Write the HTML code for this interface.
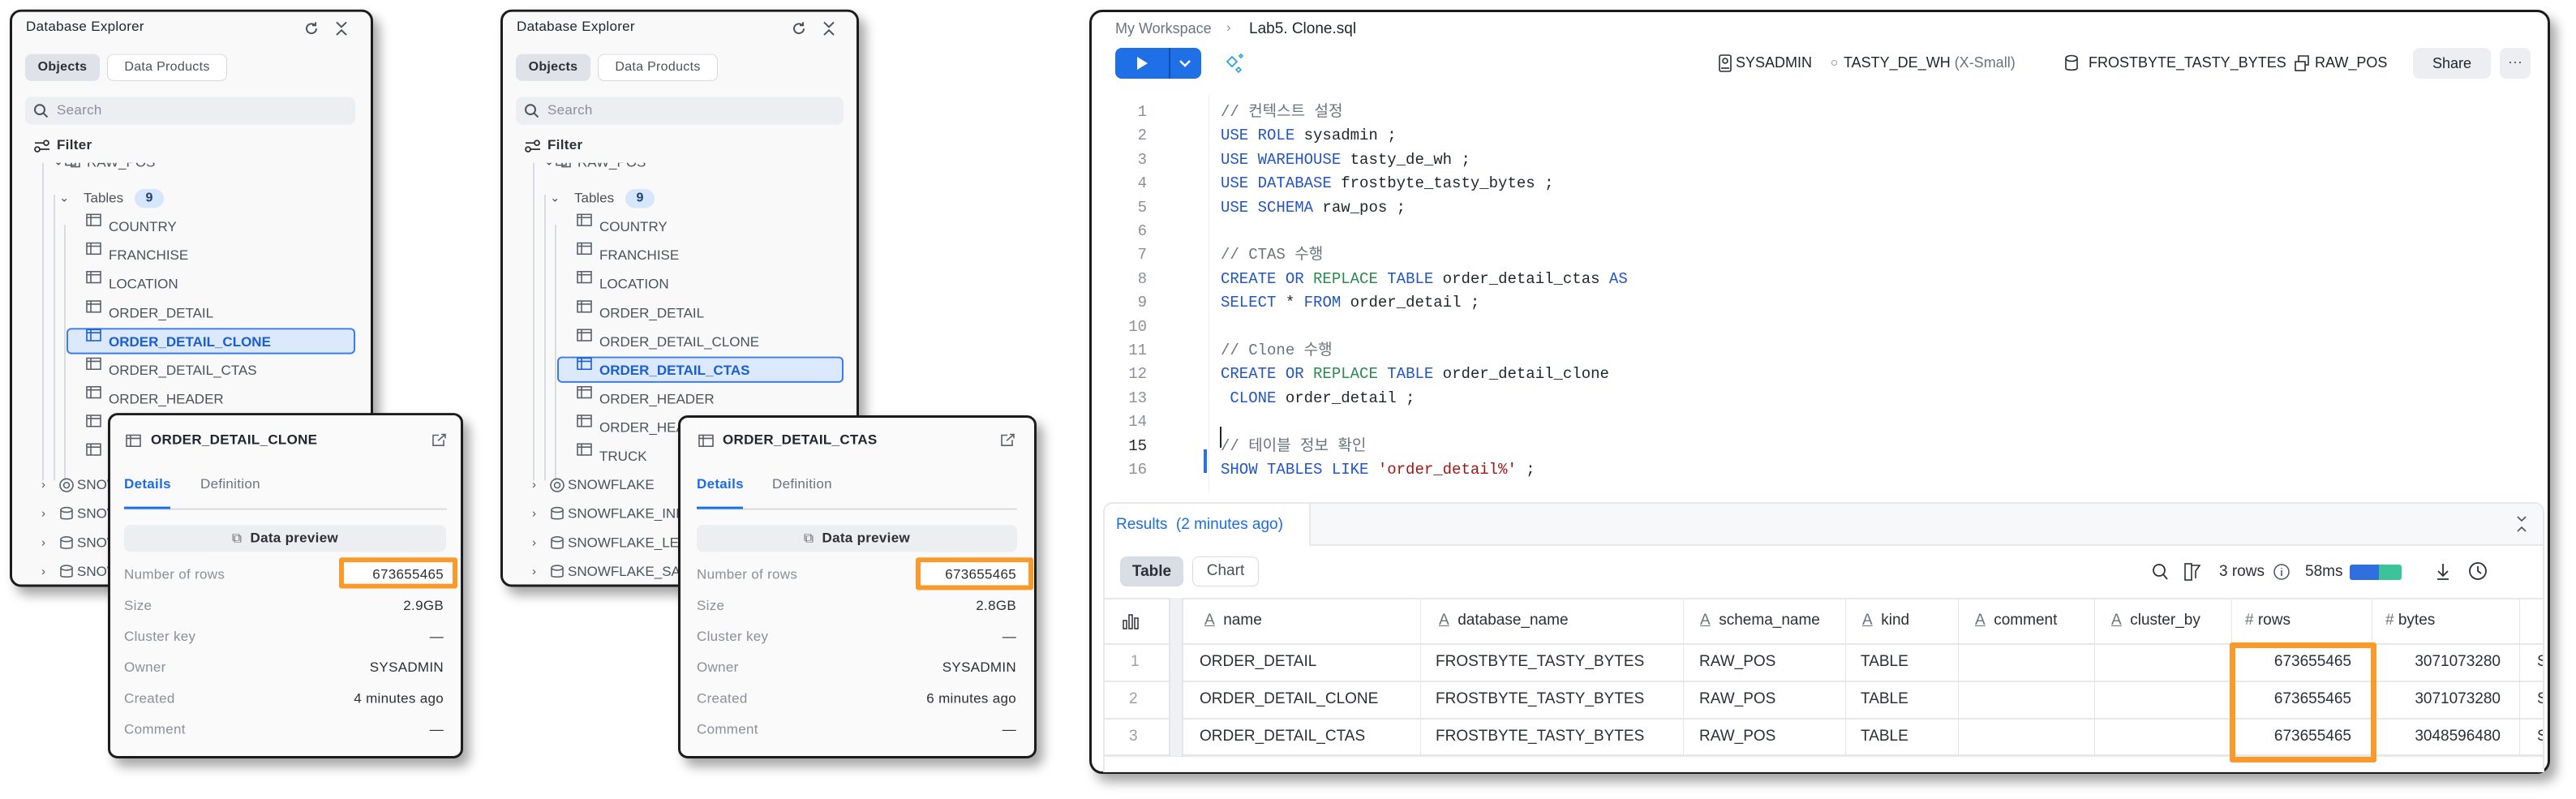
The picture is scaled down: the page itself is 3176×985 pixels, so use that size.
<!DOCTYPE html>
<html><head><meta charset="utf-8"><style>
*{box-sizing:border-box;margin:0;padding:0}
body{width:3176px;height:985px;background:#fff;position:relative;overflow:hidden;font-family:"Liberation Sans","Noto Sans CJK KR",sans-serif;color:#1e252f}
.a{position:absolute;white-space:nowrap}
.wrap{position:absolute;left:0;top:0;width:1340px;height:985px;transform:scaleY(0.979);transform-origin:0 0}
.panel{position:absolute;border:3px solid #1c1c1c;border-radius:14px;background:#f9f9fa;box-shadow:8px 10px 14px rgba(0,0,0,.35);overflow:hidden}
.row{position:absolute;height:36px;line-height:36px;font-size:17px;color:#4c525c;letter-spacing:0;white-space:nowrap}
.sel{position:absolute;background:#dce8fb;border:2px solid #3b7de8;border-radius:6px}
.pop{position:absolute;border:3px solid #1c1c1c;border-radius:12px;background:#fafafa;box-shadow:8px 10px 14px rgba(0,0,0,.35)}
.lbl{position:absolute;left:17px;font-size:17px;color:#8a8f99;letter-spacing:.3px;white-space:nowrap;transform:translateY(-50%)}
.val{position:absolute;right:21px;font-size:17px;color:#2b2f36;letter-spacing:.3px;white-space:nowrap;transform:translateY(-50%)}
.code{position:absolute;left:1505px;top:124px;font-family:"Liberation Mono","Noto Sans CJK KR",monospace;font-size:19px;line-height:29.4px;white-space:pre;color:#1e252f}
.ln{position:absolute;left:1370px;width:44px;top:124px;font-family:"Liberation Mono",monospace;font-size:19px;line-height:29.4px;text-align:right;color:#8a8f99;white-space:pre}
.k{color:#2355c4}.g{color:#2b8a4f}.c{color:#6b7380}.s{color:#a31515}
.cell{position:absolute;font-size:19px;color:#2b2f36;white-space:nowrap;transform:translateY(-50%)}
.hd{position:absolute;font-size:19px;color:#2b2f36;white-space:nowrap;transform:translateY(-50%)}
.vl{position:absolute;width:1px;background:#e3e5e9}
.hl{position:absolute;height:2px;background:#e6e8ec}
</style></head><body>
<div class="wrap">
<!-- ========== PANEL 1 ========== -->
<div class="panel" style="left:12px;top:12px;width:448px;height:727px">
 <div class="a" style="left:17px;top:9px;font-size:17px;font-weight:500;color:#1e252f;letter-spacing:.3px">Database Explorer</div>
 <svg class="a" style="left:358px;top:10px" width="22" height="22" viewBox="0 0 22 22"><path d="M17 11a6 6 0 1 1-2-4.5" fill="none" stroke="#4c525c" stroke-width="2"/><path d="M16 3v4h-4" fill="none" stroke="#4c525c" stroke-width="2"/></svg>
 <svg class="a" style="left:396px;top:10px" width="20" height="22" viewBox="0 0 20 22"><path d="M4 3l6 6 6-6M4 19l6-6 6 6" fill="none" stroke="#4c525c" stroke-width="2"/></svg>
 <div class="a" style="left:16px;top:53px;width:92px;height:34px;background:#dfe2e8;border-radius:8px;font-size:16px;font-weight:bold;line-height:34px;text-align:center;color:#2b2f36;letter-spacing:.3px">Objects</div>
 <div class="a" style="left:117px;top:53px;width:148px;height:34px;background:#fff;border:1.5px solid #d5d8de;border-radius:8px;font-size:16px;line-height:31px;text-align:center;color:#4c525c;letter-spacing:.3px">Data Products</div>
 <div class="a" style="left:16px;top:107px;width:407px;height:35px;background:#eceef1;border-radius:8px"></div>
 <svg class="a" style="left:26px;top:115px" width="20" height="20" viewBox="0 0 20 20"><circle cx="8" cy="8" r="6" fill="none" stroke="#4c525c" stroke-width="2"/><path d="M12.5 12.5l5 5" stroke="#4c525c" stroke-width="2"/></svg>
 <div class="a" style="left:55px;top:114px;font-size:17px;color:#8a8f99;letter-spacing:.3px">Search</div>
 <svg class="a" style="left:26px;top:160px" width="22" height="18" viewBox="0 0 22 18"><circle cx="5" cy="13" r="3" fill="none" stroke="#2b2f36" stroke-width="1.8"/><circle cx="16" cy="5" r="3" fill="none" stroke="#2b2f36" stroke-width="1.8"/><path d="M8 13h12M2 5h11" stroke="#2b2f36" stroke-width="1.8"/></svg>
 <div class="a" style="left:55px;top:158px;font-size:17px;font-weight:bold;color:#2b2f36;letter-spacing:.3px">Filter</div>
 <div class="a" style="left:0;top:190px;width:442px;height:537px;overflow:hidden">
  <div class="vl" style="left:37px;top:0;height:400px;background:#d8dbe0;width:2px"></div>
  <div class="vl" style="left:51px;top:40px;height:360px;background:#d8dbe0;width:2px"></div>
  <div class="vl" style="left:64px;top:78px;height:322px;background:#d8dbe0;width:2px"></div>
  <div class="row" style="left:50px;top:-20px">⌄</div>
  <svg class="a" style="left:65px;top:-8px" width="20" height="14"><rect x="1" y="1" width="12" height="10" fill="none" stroke="#5a606b" stroke-width="1.6"/><rect x="8" y="4" width="10" height="9" fill="none" stroke="#5a606b" stroke-width="1.6"/></svg>
  <div class="row" style="left:92px;top:-18px">RAW_POS</div>
  <div class="row" style="left:58px;top:27px;font-size:15px">⌄</div>
  <div class="row" style="left:88px;top:27px">Tables</div>
  <div class="a" style="left:151px;top:33px;width:36px;height:24px;border-radius:12px;background:#d6e6fb;text-align:center;font-size:16px;font-weight:bold;line-height:24px;color:#1f3e73">9</div>
  <div class="sel" style="left:67px;top:208px;width:356px;height:33px"></div>
  <svg class="a" style="left:91px;top:64px" width="20" height="17"><rect x="1" y="1" width="17" height="14" fill="none" stroke="#5a606b" stroke-width="1.6"/><path d="M1 5h17M6 1v14" stroke="#5a606b" stroke-width="1.6"/></svg>
  <div class="row" style="left:119px;top:63px">COUNTRY</div>
  <svg class="a" style="left:91px;top:100px" width="20" height="17"><rect x="1" y="1" width="17" height="14" fill="none" stroke="#5a606b" stroke-width="1.6"/><path d="M1 5h17M6 1v14" stroke="#5a606b" stroke-width="1.6"/></svg>
  <div class="row" style="left:119px;top:99px">FRANCHISE</div>
  <svg class="a" style="left:91px;top:136px" width="20" height="17"><rect x="1" y="1" width="17" height="14" fill="none" stroke="#5a606b" stroke-width="1.6"/><path d="M1 5h17M6 1v14" stroke="#5a606b" stroke-width="1.6"/></svg>
  <div class="row" style="left:119px;top:135px">LOCATION</div>
  <svg class="a" style="left:91px;top:173px" width="20" height="17"><rect x="1" y="1" width="17" height="14" fill="none" stroke="#5a606b" stroke-width="1.6"/><path d="M1 5h17M6 1v14" stroke="#5a606b" stroke-width="1.6"/></svg>
  <div class="row" style="left:119px;top:172px">ORDER_DETAIL</div>
  <svg class="a" style="left:91px;top:209px" width="20" height="17"><rect x="1" y="1" width="17" height="14" fill="none" stroke="#1a5fd1" stroke-width="1.6"/><path d="M1 5h17M6 1v14" stroke="#1a5fd1" stroke-width="1.6"/></svg>
  <div class="row" style="left:119px;top:208px;color:#1a5fd1;font-weight:bold">ORDER_DETAIL_CLONE</div>
  <svg class="a" style="left:91px;top:245px" width="20" height="17"><rect x="1" y="1" width="17" height="14" fill="none" stroke="#5a606b" stroke-width="1.6"/><path d="M1 5h17M6 1v14" stroke="#5a606b" stroke-width="1.6"/></svg>
  <div class="row" style="left:119px;top:244px">ORDER_DETAIL_CTAS</div>
  <svg class="a" style="left:91px;top:281px" width="20" height="17"><rect x="1" y="1" width="17" height="14" fill="none" stroke="#5a606b" stroke-width="1.6"/><path d="M1 5h17M6 1v14" stroke="#5a606b" stroke-width="1.6"/></svg>
  <div class="row" style="left:119px;top:280px">ORDER_HEADER</div>
  <svg class="a" style="left:91px;top:317px" width="20" height="17"><rect x="1" y="1" width="17" height="14" fill="none" stroke="#5a606b" stroke-width="1.6"/><path d="M1 5h17M6 1v14" stroke="#5a606b" stroke-width="1.6"/></svg>
  <svg class="a" style="left:91px;top:353px" width="20" height="17"><rect x="1" y="1" width="17" height="14" fill="none" stroke="#5a606b" stroke-width="1.6"/><path d="M1 5h17M6 1v14" stroke="#5a606b" stroke-width="1.6"/></svg>
  <div class="row" style="left:36px;top:388px;font-size:15px">›</div>
  <svg class="a" style="left:57px;top:396px" width="20" height="20"><circle cx="10" cy="10" r="8" fill="none" stroke="#5a606b" stroke-width="1.6"/><circle cx="10" cy="10" r="3.5" fill="none" stroke="#5a606b" stroke-width="1.6"/></svg>
  <div class="row" style="left:80px;top:388px">SNOWFLAKE</div>
  <div class="row" style="left:36px;top:424px;font-size:15px">›</div>
  <svg class="a" style="left:58px;top:432px" width="18" height="20"><ellipse cx="9" cy="5" rx="7" ry="3" fill="none" stroke="#5a606b" stroke-width="1.6"/><path d="M2 5v10c0 2 14 2 14 0V5" fill="none" stroke="#5a606b" stroke-width="1.6"/></svg>
  <div class="row" style="left:80px;top:424px">SNOWFLAKE_INFO</div>
  <div class="row" style="left:36px;top:461px;font-size:15px">›</div>
  <svg class="a" style="left:58px;top:469px" width="18" height="20"><ellipse cx="9" cy="5" rx="7" ry="3" fill="none" stroke="#5a606b" stroke-width="1.6"/><path d="M2 5v10c0 2 14 2 14 0V5" fill="none" stroke="#5a606b" stroke-width="1.6"/></svg>
  <div class="row" style="left:80px;top:461px">SNOWFLAKE_LEARN</div>
  <div class="row" style="left:36px;top:497px;font-size:15px">›</div>
  <svg class="a" style="left:58px;top:505px" width="18" height="20"><ellipse cx="9" cy="5" rx="7" ry="3" fill="none" stroke="#5a606b" stroke-width="1.6"/><path d="M2 5v10c0 2 14 2 14 0V5" fill="none" stroke="#5a606b" stroke-width="1.6"/></svg>
  <div class="row" style="left:80px;top:497px">SNOWFLAKE_SAMPLE</div>
 </div>
</div>

<!-- POPUP 1 -->
<div class="pop" style="left:133px;top:520px;width:438px;height:435px">
 <svg class="a" style="left:19px;top:24px" width="20" height="17"><rect x="1" y="1" width="17" height="14" fill="none" stroke="#5a606b" stroke-width="1.6"/><path d="M1 5h17M6 1v14" stroke="#5a606b" stroke-width="1.6"/></svg>
 <div class="a" style="left:50px;top:21px;font-size:17px;font-weight:bold;color:#1e252f;letter-spacing:.3px">ORDER_DETAIL_CLONE</div>
 <svg class="a" style="left:396px;top:22px" width="20" height="18"><path d="M9 3H2v13h13V9" fill="none" stroke="#5a606b" stroke-width="1.6"/><path d="M8 10l9-8M12 2h5v5" fill="none" stroke="#5a606b" stroke-width="1.6"/></svg>
 <div class="a" style="left:17px;top:77px;font-size:17px;font-weight:bold;color:#1a6ce7;letter-spacing:.3px">Details</div>
 <div class="a" style="left:111px;top:77px;font-size:17px;color:#6b7380;letter-spacing:.3px">Definition</div>
 <div class="a" style="left:17px;top:117px;width:398px;height:1.5px;background:#d8dbe0"></div>
 <div class="a" style="left:17px;top:115px;width:57px;height:3px;background:#1a6ce7"></div>
 <div class="a" style="left:17px;top:138px;width:397px;height:34px;background:#eceef1;border-radius:8px;text-align:center;font-size:17px;font-weight:bold;line-height:34px;color:#2b2f36;letter-spacing:.3px"><span style="font-weight:normal;color:#5a606b">⧉</span>&nbsp; Data preview</div>
 <div class="a" style="left:282px;top:179px;width:146px;height:39px;border:6px solid #f99a2b;border-radius:3px;background:#fff"></div>
 <div class="lbl" style="top:201px">Number of rows</div><div class="val" style="top:201px">673655465</div>
 <div class="lbl" style="top:240px">Size</div><div class="val" style="top:240px">2.9GB</div>
 <div class="lbl" style="top:279px">Cluster key</div><div class="val" style="top:279px">—</div>
 <div class="lbl" style="top:318px">Owner</div><div class="val" style="top:318px">SYSADMIN</div>
 <div class="lbl" style="top:357px">Created</div><div class="val" style="top:357px">4 minutes ago</div>
 <div class="lbl" style="top:396px">Comment</div><div class="val" style="top:396px">—</div>
</div>

<!-- ========== PANEL 2 ========== -->
<div class="panel" style="left:617px;top:12px;width:442px;height:727px">
 <div class="a" style="left:17px;top:9px;font-size:17px;font-weight:500;color:#1e252f;letter-spacing:.3px">Database Explorer</div>
 <svg class="a" style="left:354px;top:10px" width="22" height="22" viewBox="0 0 22 22"><path d="M17 11a6 6 0 1 1-2-4.5" fill="none" stroke="#4c525c" stroke-width="2"/><path d="M16 3v4h-4" fill="none" stroke="#4c525c" stroke-width="2"/></svg>
 <svg class="a" style="left:392px;top:10px" width="20" height="22" viewBox="0 0 20 22"><path d="M4 3l6 6 6-6M4 19l6-6 6 6" fill="none" stroke="#4c525c" stroke-width="2"/></svg>
 <div class="a" style="left:16px;top:53px;width:92px;height:34px;background:#dfe2e8;border-radius:8px;font-size:16px;font-weight:bold;line-height:34px;text-align:center;color:#2b2f36;letter-spacing:.3px">Objects</div>
 <div class="a" style="left:117px;top:53px;width:148px;height:34px;background:#fff;border:1.5px solid #d5d8de;border-radius:8px;font-size:16px;line-height:31px;text-align:center;color:#4c525c;letter-spacing:.3px">Data Products</div>
 <div class="a" style="left:16px;top:107px;width:404px;height:35px;background:#eceef1;border-radius:8px"></div>
 <svg class="a" style="left:26px;top:115px" width="20" height="20" viewBox="0 0 20 20"><circle cx="8" cy="8" r="6" fill="none" stroke="#4c525c" stroke-width="2"/><path d="M12.5 12.5l5 5" stroke="#4c525c" stroke-width="2"/></svg>
 <div class="a" style="left:55px;top:114px;font-size:17px;color:#8a8f99;letter-spacing:.3px">Search</div>
 <svg class="a" style="left:26px;top:160px" width="22" height="18" viewBox="0 0 22 18"><circle cx="5" cy="13" r="3" fill="none" stroke="#2b2f36" stroke-width="1.8"/><circle cx="16" cy="5" r="3" fill="none" stroke="#2b2f36" stroke-width="1.8"/><path d="M8 13h12M2 5h11" stroke="#2b2f36" stroke-width="1.8"/></svg>
 <div class="a" style="left:55px;top:158px;font-size:17px;font-weight:bold;color:#2b2f36;letter-spacing:.3px">Filter</div>
 <div class="a" style="left:0;top:190px;width:436px;height:537px;overflow:hidden">
  <div class="vl" style="left:37px;top:0;height:400px;background:#d8dbe0;width:2px"></div>
  <div class="vl" style="left:51px;top:40px;height:360px;background:#d8dbe0;width:2px"></div>
  <div class="vl" style="left:64px;top:78px;height:322px;background:#d8dbe0;width:2px"></div>
  <div class="row" style="left:50px;top:-20px">⌄</div>
  <svg class="a" style="left:65px;top:-8px" width="20" height="14"><rect x="1" y="1" width="12" height="10" fill="none" stroke="#5a606b" stroke-width="1.6"/><rect x="8" y="4" width="10" height="9" fill="none" stroke="#5a606b" stroke-width="1.6"/></svg>
  <div class="row" style="left:92px;top:-18px">RAW_POS</div>
  <div class="row" style="left:58px;top:27px;font-size:15px">⌄</div>
  <div class="row" style="left:88px;top:27px">Tables</div>
  <div class="a" style="left:151px;top:33px;width:36px;height:24px;border-radius:12px;background:#d6e6fb;text-align:center;font-size:16px;font-weight:bold;line-height:24px;color:#1f3e73">9</div>
  <div class="sel" style="left:67px;top:244px;width:353px;height:33px"></div>
  <svg class="a" style="left:91px;top:64px" width="20" height="17"><rect x="1" y="1" width="17" height="14" fill="none" stroke="#5a606b" stroke-width="1.6"/><path d="M1 5h17M6 1v14" stroke="#5a606b" stroke-width="1.6"/></svg>
  <div class="row" style="left:119px;top:63px">COUNTRY</div>
  <svg class="a" style="left:91px;top:100px" width="20" height="17"><rect x="1" y="1" width="17" height="14" fill="none" stroke="#5a606b" stroke-width="1.6"/><path d="M1 5h17M6 1v14" stroke="#5a606b" stroke-width="1.6"/></svg>
  <div class="row" style="left:119px;top:99px">FRANCHISE</div>
  <svg class="a" style="left:91px;top:136px" width="20" height="17"><rect x="1" y="1" width="17" height="14" fill="none" stroke="#5a606b" stroke-width="1.6"/><path d="M1 5h17M6 1v14" stroke="#5a606b" stroke-width="1.6"/></svg>
  <div class="row" style="left:119px;top:135px">LOCATION</div>
  <svg class="a" style="left:91px;top:173px" width="20" height="17"><rect x="1" y="1" width="17" height="14" fill="none" stroke="#5a606b" stroke-width="1.6"/><path d="M1 5h17M6 1v14" stroke="#5a606b" stroke-width="1.6"/></svg>
  <div class="row" style="left:119px;top:172px">ORDER_DETAIL</div>
  <svg class="a" style="left:91px;top:209px" width="20" height="17"><rect x="1" y="1" width="17" height="14" fill="none" stroke="#5a606b" stroke-width="1.6"/><path d="M1 5h17M6 1v14" stroke="#5a606b" stroke-width="1.6"/></svg>
  <div class="row" style="left:119px;top:208px">ORDER_DETAIL_CLONE</div>
  <svg class="a" style="left:91px;top:245px" width="20" height="17"><rect x="1" y="1" width="17" height="14" fill="none" stroke="#1a5fd1" stroke-width="1.6"/><path d="M1 5h17M6 1v14" stroke="#1a5fd1" stroke-width="1.6"/></svg>
  <div class="row" style="left:119px;top:244px;color:#1a5fd1;font-weight:bold">ORDER_DETAIL_CTAS</div>
  <svg class="a" style="left:91px;top:281px" width="20" height="17"><rect x="1" y="1" width="17" height="14" fill="none" stroke="#5a606b" stroke-width="1.6"/><path d="M1 5h17M6 1v14" stroke="#5a606b" stroke-width="1.6"/></svg>
  <div class="row" style="left:119px;top:280px">ORDER_HEADER</div>
  <svg class="a" style="left:91px;top:317px" width="20" height="17"><rect x="1" y="1" width="17" height="14" fill="none" stroke="#5a606b" stroke-width="1.6"/><path d="M1 5h17M6 1v14" stroke="#5a606b" stroke-width="1.6"/></svg>
  <div class="row" style="left:119px;top:316px">ORDER_HEADER_CLONE</div>
  <svg class="a" style="left:91px;top:353px" width="20" height="17"><rect x="1" y="1" width="17" height="14" fill="none" stroke="#5a606b" stroke-width="1.6"/><path d="M1 5h17M6 1v14" stroke="#5a606b" stroke-width="1.6"/></svg>
  <div class="row" style="left:119px;top:352px">TRUCK</div>
  <div class="row" style="left:36px;top:388px;font-size:15px">›</div>
  <svg class="a" style="left:57px;top:396px" width="20" height="20"><circle cx="10" cy="10" r="8" fill="none" stroke="#5a606b" stroke-width="1.6"/><circle cx="10" cy="10" r="3.5" fill="none" stroke="#5a606b" stroke-width="1.6"/></svg>
  <div class="row" style="left:80px;top:388px">SNOWFLAKE</div>
  <div class="row" style="left:36px;top:424px;font-size:15px">›</div>
  <svg class="a" style="left:58px;top:432px" width="18" height="20"><ellipse cx="9" cy="5" rx="7" ry="3" fill="none" stroke="#5a606b" stroke-width="1.6"/><path d="M2 5v10c0 2 14 2 14 0V5" fill="none" stroke="#5a606b" stroke-width="1.6"/></svg>
  <div class="row" style="left:80px;top:424px">SNOWFLAKE_INFO</div>
  <div class="row" style="left:36px;top:461px;font-size:15px">›</div>
  <svg class="a" style="left:58px;top:469px" width="18" height="20"><ellipse cx="9" cy="5" rx="7" ry="3" fill="none" stroke="#5a606b" stroke-width="1.6"/><path d="M2 5v10c0 2 14 2 14 0V5" fill="none" stroke="#5a606b" stroke-width="1.6"/></svg>
  <div class="row" style="left:80px;top:461px">SNOWFLAKE_LEARN</div>
  <div class="row" style="left:36px;top:497px;font-size:15px">›</div>
  <svg class="a" style="left:58px;top:505px" width="18" height="20"><ellipse cx="9" cy="5" rx="7" ry="3" fill="none" stroke="#5a606b" stroke-width="1.6"/><path d="M2 5v10c0 2 14 2 14 0V5" fill="none" stroke="#5a606b" stroke-width="1.6"/></svg>
  <div class="row" style="left:80px;top:497px">SNOWFLAKE_SAMPLE</div>
 </div>
</div>

<!-- POPUP 2 -->
<div class="pop" style="left:836px;top:523px;width:442px;height:432px">
 <svg class="a" style="left:22px;top:21px" width="20" height="17"><rect x="1" y="1" width="17" height="14" fill="none" stroke="#5a606b" stroke-width="1.6"/><path d="M1 5h17M6 1v14" stroke="#5a606b" stroke-width="1.6"/></svg>
 <div class="a" style="left:52px;top:18px;font-size:17px;font-weight:bold;color:#1e252f;letter-spacing:.3px">ORDER_DETAIL_CTAS</div>
 <svg class="a" style="left:394px;top:19px" width="20" height="18"><path d="M9 3H2v13h13V9" fill="none" stroke="#5a606b" stroke-width="1.6"/><path d="M8 10l9-8M12 2h5v5" fill="none" stroke="#5a606b" stroke-width="1.6"/></svg>
 <div class="a" style="left:20px;top:74px;font-size:17px;font-weight:bold;color:#1a6ce7;letter-spacing:.3px">Details</div>
 <div class="a" style="left:113px;top:74px;font-size:17px;color:#6b7380;letter-spacing:.3px">Definition</div>
 <div class="a" style="left:20px;top:114px;width:395px;height:1.5px;background:#d8dbe0"></div>
 <div class="a" style="left:20px;top:112px;width:57px;height:3px;background:#1a6ce7"></div>
 <div class="a" style="left:20px;top:135px;width:395px;height:34px;background:#eceef1;border-radius:8px;text-align:center;font-size:17px;font-weight:bold;line-height:34px;color:#2b2f36;letter-spacing:.3px"><span style="font-weight:normal;color:#5a606b">⧉</span>&nbsp; Data preview</div>
 <div class="a" style="left:290px;top:176px;width:145px;height:41px;border:6px solid #f99a2b;border-radius:3px;background:#fff"></div>
 <div class="lbl" style="left:20px;top:198px">Number of rows</div><div class="val" style="right:22px;top:198px">673655465</div>
 <div class="lbl" style="left:20px;top:237px">Size</div><div class="val" style="right:22px;top:237px">2.8GB</div>
 <div class="lbl" style="left:20px;top:276px">Cluster key</div><div class="val" style="right:22px;top:276px">—</div>
 <div class="lbl" style="left:20px;top:315px">Owner</div><div class="val" style="right:22px;top:315px">SYSADMIN</div>
 <div class="lbl" style="left:20px;top:354px">Created</div><div class="val" style="right:22px;top:354px">6 minutes ago</div>
 <div class="lbl" style="left:20px;top:393px">Comment</div><div class="val" style="right:22px;top:393px">—</div>
</div>
</div>

<!-- ========== EDITOR ========== -->
<div class="a" style="left:1343px;top:12px;width:1801px;height:942px;border:3px solid #1c1c1c;border-radius:16px;background:#fff;box-shadow:8px 10px 14px rgba(0,0,0,.35)"></div>
<div class="a" style="left:1375px;top:25px;font-size:18px;color:#6b7380">My Workspace</div>
<div class="a" style="left:1512px;top:24px;font-size:17px;color:#8a8f99">›</div>
<div class="a" style="left:1540px;top:25px;font-size:19px;color:#1e252f">Lab5. Clone.sql</div>
<div class="a" style="left:1375px;top:59px;width:106px;height:38px;background:#1f6fe6;border-radius:8px"></div>
<div class="a" style="left:1441px;top:59px;width:2px;height:38px;background:#0e4fb4"></div>
<svg class="a" style="left:1400px;top:69px" width="16" height="18"><path d="M2 1l13 8-13 8z" fill="#fff"/></svg>
<svg class="a" style="left:1452px;top:70px" width="18" height="16"><path d="M3 5l6 6 6-6" fill="none" stroke="#fff" stroke-width="2.5"/></svg>
<svg class="a" style="left:1510px;top:64px" width="26" height="28"><path d="M9 6l6 6-6 6-6-6z" fill="none" stroke="#2aa3e0" stroke-width="1.8"/><path d="M20 3l2 2-2 2-2-2z M17 19l3 3-3 3-3-3z" fill="none" stroke="#2aa3e0" stroke-width="1.6"/></svg>

<svg class="a" style="left:2118px;top:67px" width="18" height="22"><rect x="2" y="1" width="14" height="20" rx="2" fill="none" stroke="#2b2f36" stroke-width="1.6"/><circle cx="9" cy="8" r="3" fill="none" stroke="#2b2f36" stroke-width="1.6"/><path d="M4 17h10" stroke="#2b2f36" stroke-width="1.6"/></svg>
<div class="a" style="left:2140px;top:67px;font-size:18px;color:#1e252f">SYSADMIN</div>
<div class="a" style="left:2258px;top:74px;width:7px;height:7px;border:1.5px solid #9aa0aa;border-radius:50%"></div>
<div class="a" style="left:2273px;top:67px;font-size:18px;color:#1e252f">TASTY_DE_WH <span style="color:#6b7380">(X-Small)</span></div>
<svg class="a" style="left:2545px;top:67px" width="18" height="22"><ellipse cx="9" cy="5" rx="7" ry="3.5" fill="none" stroke="#2b2f36" stroke-width="1.6"/><path d="M2 5v12c0 3 14 3 14 0V5" fill="none" stroke="#2b2f36" stroke-width="1.6"/></svg>
<div class="a" style="left:2575px;top:67px;font-size:18px;color:#1e252f">FROSTBYTE_TASTY_BYTES</div>
<svg class="a" style="left:2828px;top:67px" width="20" height="22"><rect x="2" y="9" width="12" height="11" fill="none" stroke="#2b2f36" stroke-width="1.6"/><path d="M6 9V2h12v11h-4" fill="none" stroke="#2b2f36" stroke-width="1.6"/></svg>
<div class="a" style="left:2854px;top:67px;font-size:18px;color:#1e252f">RAW_POS</div>
<div class="a" style="left:2975px;top:59px;width:96px;height:38px;background:#eceef1;border-radius:8px;text-align:center;line-height:38px;font-size:18px;color:#1e252f">Share</div>
<div class="a" style="left:3082px;top:59px;width:38px;height:38px;background:#eceef1;border-radius:8px;text-align:center;line-height:34px;font-size:18px;color:#4c525c">···</div>

<div class="a" style="left:1490px;top:117px;width:1px;height:490px;background:#eceef1"></div>
<div class="ln">1
2
3
4
5
6
7
8
9
10
11
12
13
14
<span style="color:#1e252f">15</span>
16</div>
<div class="a" style="left:1484px;top:554px;width:4px;height:29px;background:#2f6fe0"></div>
<div class="a" style="left:1504px;top:526px;width:2px;height:26px;background:#1e252f"></div>
<div class="code"><span class="c">// 컨텍스트 설정</span>
<span class="k">USE ROLE</span> sysadmin ;
<span class="k">USE WAREHOUSE</span> tasty_de_wh ;
<span class="k">USE DATABASE</span> frostbyte_tasty_bytes ;
<span class="k">USE SCHEMA</span> raw_pos ;

<span class="c">// CTAS 수행</span>
<span class="k">CREATE OR</span> <span class="g">REPLACE</span> <span class="k">TABLE</span> order_detail_ctas <span class="k">AS</span>
<span class="k">SELECT</span> * <span class="k">FROM</span> order_detail ;

<span class="c">// Clone 수행</span>
<span class="k">CREATE OR</span> <span class="g">REPLACE</span> <span class="k">TABLE</span> order_detail_clone
 <span class="k">CLONE</span> order_detail ;

<span class="c">// 테이블 정보 확인</span>
<span class="k">SHOW TABLES LIKE</span> <span class="s">'order_detail%'</span> ;</div>

<!-- RESULTS -->
<div class="a" style="left:1360px;top:619px;width:1777px;height:333px;border:2px solid #e6e8ec;border-bottom:none;border-radius:12px 12px 0 0;overflow:hidden;background:#fff">
 <div class="a" style="left:252px;top:0;width:1530px;height:52px;background:#f7f8fa;border-bottom:2px solid #e6e8ec;border-left:2px solid #e6e8ec"></div>
 <div class="a" style="left:14px;top:15px;font-size:19px;color:#1a6ce7">Results&nbsp; (2 minutes ago)</div>
 <svg class="a" style="left:1739px;top:14px" width="16" height="22"><path d="M3 2l5 5 5-5M3 20l5-5 5 5" fill="none" stroke="#4c525c" stroke-width="1.6"/></svg>
 <div class="a" style="left:19px;top:65px;width:78px;height:37px;background:#d9dde5;border-radius:8px;text-align:center;line-height:37px;font-size:19px;color:#2b2f36;font-weight:bold">Table</div>
 <div class="a" style="left:108px;top:65px;width:82px;height:37px;border:1.5px solid #d8dbe0;border-radius:8px;text-align:center;line-height:34px;font-size:19px;color:#4c525c">Chart</div>
 <svg class="a" style="left:1291px;top:73px" width="22" height="24"><circle cx="9" cy="9" r="7" fill="none" stroke="#2b2f36" stroke-width="1.8"/><path d="M14 14l5 6" stroke="#2b2f36" stroke-width="1.8"/></svg>
 <svg class="a" style="left:1330px;top:72px" width="22" height="24"><rect x="2" y="2" width="8" height="20" fill="none" stroke="#2b2f36" stroke-width="1.6"/><path d="M10 4h10l-5 7v9" fill="none" stroke="#2b2f36" stroke-width="1.6"/></svg>
 <div class="a" style="left:1374px;top:73px;font-size:19px;color:#2b2f36">3 rows</div>
 <svg class="a" style="left:1440px;top:73px" width="22" height="22"><circle cx="11" cy="11" r="9" fill="none" stroke="#4c525c" stroke-width="1.5"/><path d="M11 9v7M11 6v1" stroke="#4c525c" stroke-width="1.6"/></svg>
 <div class="a" style="left:1480px;top:73px;font-size:19px;color:#2b2f36">58ms</div>
 <div class="a" style="left:1535px;top:75px;width:36px;height:19px;background:#2f6fe0;border-radius:3px 0 0 3px"></div>
 <div class="a" style="left:1571px;top:75px;width:28px;height:19px;background:#3cc39a;border-radius:0 3px 3px 0"></div>
 <svg class="a" style="left:1640px;top:72px" width="20" height="24"><path d="M10 2v15M4 11l6 6 6-6M3 21h14" fill="none" stroke="#2b2f36" stroke-width="1.8"/></svg>
 <svg class="a" style="left:1680px;top:70px" width="26" height="26"><circle cx="13" cy="13" r="10" fill="none" stroke="#2b2f36" stroke-width="1.8"/><path d="M13 7v6l4 3" fill="none" stroke="#2b2f36" stroke-width="1.8"/></svg>

 <div class="hl" style="left:0;top:116px;width:1780px"></div>
 <div class="hl" style="left:0;top:172px;width:1780px"></div>
 <div class="hl" style="left:0;top:218px;width:1780px"></div>
 <div class="hl" style="left:0;top:264px;width:1780px"></div>
 <div class="hl" style="left:0;top:309px;width:1780px;height:3px"></div>
 <div class="a" style="left:79px;top:116px;width:18px;height:195px;background:#f0f1f4;border-left:2px solid #e3e5e9;border-right:2px solid #e3e5e9"></div>
 <div class="vl" style="left:389px;top:116px;height:195px"></div>
 <div class="vl" style="left:713px;top:116px;height:195px"></div>
 <div class="vl" style="left:913px;top:116px;height:195px"></div>
 <div class="vl" style="left:1052px;top:116px;height:195px"></div>
 <div class="vl" style="left:1220px;top:116px;height:195px"></div>
 <div class="vl" style="left:1389px;top:116px;height:195px"></div>
 <div class="vl" style="left:1562px;top:116px;height:195px"></div>
 <div class="vl" style="left:1744px;top:116px;height:195px"></div>

 <svg class="a" style="left:22px;top:135px" width="20" height="20"><rect x="1" y="9" width="4" height="10" fill="none" stroke="#2b2f36" stroke-width="1.5"/><rect x="8" y="2" width="4" height="17" fill="none" stroke="#2b2f36" stroke-width="1.5"/><rect x="15" y="6" width="4" height="13" fill="none" stroke="#2b2f36" stroke-width="1.5"/></svg>
 <div class="hd" style="left:123px;top:144px"><span style="color:#6b7380;text-decoration:underline">A</span>&nbsp; name</div>
 <div class="hd" style="left:412px;top:144px"><span style="color:#6b7380;text-decoration:underline">A</span>&nbsp; database_name</div>
 <div class="hd" style="left:734px;top:144px"><span style="color:#6b7380;text-decoration:underline">A</span>&nbsp; schema_name</div>
 <div class="hd" style="left:934px;top:144px"><span style="color:#6b7380;text-decoration:underline">A</span>&nbsp; kind</div>
 <div class="hd" style="left:1073px;top:144px"><span style="color:#6b7380;text-decoration:underline">A</span>&nbsp; comment</div>
 <div class="hd" style="left:1241px;top:144px"><span style="color:#6b7380;text-decoration:underline">A</span>&nbsp; cluster_by</div>
 <div class="hd" style="left:1406px;top:144px"><span style="color:#6b7380">#</span> rows</div>
 <div class="hd" style="left:1579px;top:144px"><span style="color:#6b7380">#</span> bytes</div>

 <div class="cell" style="left:32px;top:195px;color:#9aa0aa">1</div>
 <div class="cell" style="left:30px;top:241px;color:#9aa0aa">2</div>
 <div class="cell" style="left:30px;top:287px;color:#9aa0aa">3</div>
 <div class="cell" style="left:117px;top:195px">ORDER_DETAIL</div>
 <div class="cell" style="left:117px;top:241px">ORDER_DETAIL_CLONE</div>
 <div class="cell" style="left:117px;top:287px">ORDER_DETAIL_CTAS</div>
 <div class="cell" style="left:408px;top:195px">FROSTBYTE_TASTY_BYTES</div>
 <div class="cell" style="left:408px;top:241px">FROSTBYTE_TASTY_BYTES</div>
 <div class="cell" style="left:408px;top:287px">FROSTBYTE_TASTY_BYTES</div>
 <div class="cell" style="left:733px;top:195px">RAW_POS</div>
 <div class="cell" style="left:733px;top:241px">RAW_POS</div>
 <div class="cell" style="left:733px;top:287px">RAW_POS</div>
 <div class="cell" style="left:932px;top:195px">TABLE</div>
 <div class="cell" style="left:932px;top:241px">TABLE</div>
 <div class="cell" style="left:932px;top:287px">TABLE</div>
 <div class="cell" style="right:236px;top:195px">673655465</div>
 <div class="cell" style="right:236px;top:241px">673655465</div>
 <div class="cell" style="right:236px;top:287px">673655465</div>
 <div class="cell" style="right:52px;top:195px">3071073280</div>
 <div class="cell" style="right:52px;top:241px">3071073280</div>
 <div class="cell" style="right:52px;top:287px">3048596480</div>
 <div class="cell" style="left:1766px;top:195px">S</div>
 <div class="cell" style="left:1766px;top:241px">S</div>
 <div class="cell" style="left:1766px;top:287px">S</div>
</div>
<div class="a" style="left:2749px;top:792px;width:181px;height:148px;border:7px solid #f99a2b;border-radius:3px"></div>
</body></html>
